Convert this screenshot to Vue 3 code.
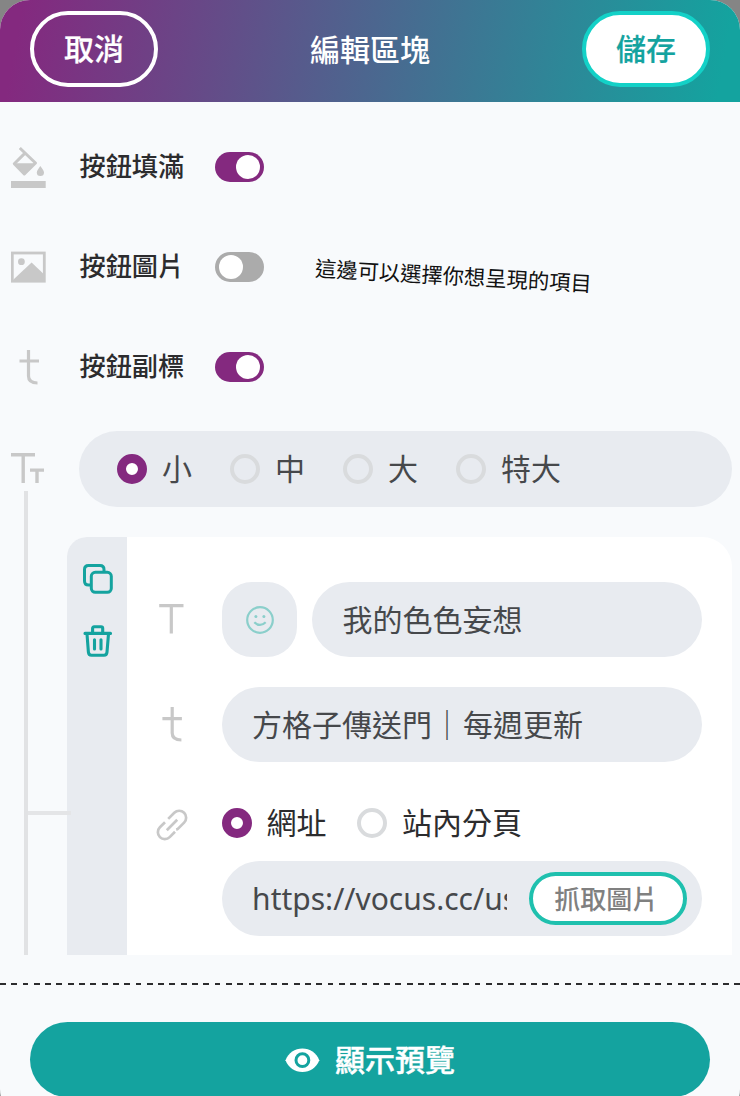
<template>
  <div class="backdrop">
    <main class="sheet">
      <header class="bar">
        <button class="btn cancel">取消</button>
        <h1>編輯區塊</h1>
        <button class="btn save">儲存</button>
      </header>

      <section class="settings">
        <div v-for="item in settings" :key="item.icon" class="setting">
          <span class="setting-icon">
            <svg v-if="item.icon === 'fill'" width="36" height="42" viewBox="0 0 36 42">
              <path d="M8.8 2 L24.5 17 L13.3 28 L3.3 17.7 L14 7.1" fill="none" stroke="#c8c8c8" stroke-width="3" stroke-linejoin="round" />
              <path d="M3 17.3 H25 L14 28.5 Z" fill="#c8c8c8" />
              <path d="M29.3 20 C31 22.5 33 24.7 33 26.5 A3.6 3.6 0 0 1 25.8 26.5 C25.8 24.7 27.8 22.5 29.3 20 Z" fill="#c8c8c8" />
              <rect x="0" y="35" width="34.7" height="7" fill="#c8c8c8" />
            </svg>
            <svg v-else-if="item.icon === 'image'" width="36" height="32" viewBox="0 0 36 32">
              <rect x="1.3" y="2" width="32" height="28.2" fill="none" stroke="#c8c8c8" stroke-width="2.8" />
              <circle cx="10.4" cy="10.7" r="3.4" fill="#c8c8c8" />
              <path d="M3 28 L20.6 11.5 L33.5 23.8 V30 H2 Z" fill="#c8c8c8" />
            </svg>
            <svg v-else width="36" height="36" viewBox="0 0 36 36">
              <path d="M17.5 1 V27 Q17.5 34 26.5 34 M8.5 12 H28" fill="none" stroke="#c8c8c8" stroke-width="3.2" />
            </svg>
          </span>
          <span class="setting-label">{{ item.label }}</span>
          <span class="toggle" :class="{ on: item.on }"><i></i></span>
          <span v-if="item.note" class="note">{{ item.note }}</span>
        </div>
      </section>

      <section class="block">
        <div class="rail">
          <svg width="36" height="32" viewBox="0 0 36 32">
            <path d="M0 1.7 H24 M12.2 2 V30 M19 17.1 H33 M26 17 V30" fill="none" stroke="#c8c8c8" stroke-width="3.4" />
          </svg>
          <div class="line"><i class="branch"></i></div>
        </div>

        <div class="block-main">
          <div class="sizes">
            <label v-for="size in sizes" :key="size">
              <span class="radio" :class="{ checked: size === '小' }"></span>{{ size }}
            </label>
          </div>

          <article class="card">
            <aside class="tools">
              <svg width="30" height="30" viewBox="0 0 30 30">
                <g fill="none" stroke="#14a39f" stroke-width="3" stroke-linejoin="round">
                  <path d="M8 21 H5.5 Q1.5 21 1.5 17 V5.5 Q1.5 1.5 5.5 1.5 H17 Q21 1.5 21 5.5 V8" />
                  <rect x="8.3" y="8.3" width="20" height="20" rx="4" />
                </g>
              </svg>
              <svg width="30" height="32" viewBox="0 0 30 32">
                <g fill="none" stroke="#14a39f" stroke-width="3.1" stroke-linecap="round" stroke-linejoin="round">
                  <path d="M2 8.4 H27.5 M9.6 8 V3.5 Q9.6 1.8 11.2 1.8 H18 Q19.7 1.8 19.7 3.5 V8 M4 9 L5.4 27.2 Q5.7 30.3 8.5 30.3 H21 Q23.7 30.3 24 27.2 L25.5 9 M11.5 14.8 V24 M18 14.8 V24" />
                </g>
              </svg>
            </aside>

            <div class="form">
              <div class="field">
                <span class="field-icon">
                  <svg width="26" height="32" viewBox="0 0 26 32">
                    <path d="M0.2 1.7 H24.5 M12.3 2 V29.5" fill="none" stroke="#c8c8c8" stroke-width="3.2" />
                  </svg>
                </span>
                <span class="emoji">
                  <svg width="28" height="28" viewBox="0 0 28 28">
                    <circle cx="14" cy="14" r="12.8" fill="none" stroke="#8bcfcb" stroke-width="2.2" />
                    <circle cx="9.9" cy="10.4" r="1.5" fill="#8bcfcb" />
                    <circle cx="17.9" cy="10.4" r="1.5" fill="#8bcfcb" />
                    <path d="M8.3 16.2 Q14 21.7 19.7 16.2" fill="none" stroke="#8bcfcb" stroke-width="2.2" />
                  </svg>
                </span>
                <div class="input">我的色色妄想</div>
              </div>

              <div class="field">
                <span class="field-icon">
                  <svg width="26" height="38" viewBox="0 0 26 38">
                    <path d="M13.2 1 V27 Q13.2 34 22.4 34 M3.4 12.7 H22.9" fill="none" stroke="#c8c8c8" stroke-width="3.2" />
                  </svg>
                </span>
                <div class="input">方格子傳送門<span class="divider">｜</span>每週更新</div>
              </div>

              <div class="field link-field">
                <span class="field-icon">
                  <svg width="32" height="32" viewBox="0 0 32 32">
                    <path d="M12.2 9.9 L18.3 3.8 A6.9 6.9 0 0 1 28.1 13.6 L22.6 19.1 A5.5 5.5 0 0 1 20.2 20.6 M19 22.8 L13.7 28.1 A6.9 6.9 0 0 1 3.9 18.3 L9 13.2 M10.8 21.2 L21.2 10.8" fill="none" stroke="#c8c8c8" stroke-width="2.7" />
                  </svg>
                </span>
                <div class="link-body">
                  <div class="targets">
                    <label><span class="radio checked"></span>網址</label>
                    <label><span class="radio"></span>站內分頁</label>
                  </div>
                  <div class="input url">
                    <span class="url-text">https://vocus.cc/user</span>
                    <button class="fetch">抓取圖片</button>
                  </div>
                </div>
              </div>
            </div>
          </article>
        </div>
      </section>

      <footer class="foot">
        <button class="preview">
          <svg width="35" height="26" viewBox="0 0 35 26">
            <path d="M0.5 13.2 C3.5 5.7 9.8 1.5 17.4 1.5 C25 1.5 31.3 5.7 34.3 13.2 C31.3 20.7 25 25 17.4 25 C9.8 25 3.5 20.7 0.5 13.2 Z" fill="#fff" />
            <circle cx="17.4" cy="13.2" r="6.4" fill="#fff" stroke="#14a39f" stroke-width="3" />
          </svg>
          顯示預覽
        </button>
      </footer>
    </main>
  </div>
</template>

<script setup>
const settings = [
  { icon: "fill", label: "按鈕填滿", on: true },
  { icon: "image", label: "按鈕圖片", on: false, note: "這邊可以選擇你想呈現的項目" },
  { icon: "text", label: "按鈕副標", on: true },
];

const sizes = ["小", "中", "大", "特大"];
</script>

<style>
body {
  margin: 0;
  overflow: hidden;
}
</style>

<style scoped>
* {
  box-sizing: border-box;
}
svg {
  display: block;
  flex: none;
}
button {
  font: inherit;
  padding: 0;
  cursor: pointer;
}
.backdrop {
  height: 1096px;
  background: #858585;
  overflow: hidden;
}
.sheet {
  height: 1119px;
  display: flex;
  flex-direction: column;
  overflow: hidden;
  border-radius: 30px;
  background: #f8fafc;
  font-family: "Noto Sans", "Noto Sans CJK TC", sans-serif;
  font-size: 30px;
  line-height: 40px;
  color: #46484b;
}

.bar {
  flex: none;
  height: 101.5px;
  padding: 0 30px 4px;
  display: flex;
  align-items: center;
  justify-content: space-between;
  background: linear-gradient(100deg, #84297f 3%, #14a39f 97%);
}
.bar h1 {
  margin: 3px 0 0;
  font-size: 30px;
  font-weight: 500;
  color: #fff;
}
.btn {
  width: 128px;
  height: 76px;
  border: 4px solid #fff;
  border-radius: 38px;
  font-weight: 500;
  -webkit-text-stroke: 0.2px currentColor;
}
.cancel {
  background: transparent;
  color: #fff;
}
.save {
  background: #fff;
  border-color: #13d1c7;
  color: #14a39f;
}

.settings {
  flex: none;
  padding: 15.5px 0 14px 11px;
}
.setting {
  height: 100px;
  display: flex;
  align-items: center;
}
.setting-icon {
  width: 68.5px;
}
.setting-label {
  width: 135px;
  padding-bottom: 3px;
  font-size: 26.2px;
  font-weight: 500;
  color: #2c2c2e;
}
.toggle {
  width: 49.5px;
  height: 30px;
  padding: 3px 4px;
  display: flex;
  border-radius: 15px;
  background: #ababab;
}
.toggle i {
  width: 24px;
  height: 24px;
  border-radius: 50%;
  background: #fff;
}
.toggle.on {
  justify-content: flex-end;
  background: #84297f;
}
.note {
  margin: 18px 0 0 51px;
  font-size: 21.3px;
  line-height: 30px;
  color: #111;
  transform: rotate(3.2deg);
}

.block {
  flex: none;
  height: 524px;
  display: flex;
}
.rail {
  width: 67px;
  flex: none;
  padding: 22px 0 0 11px;
  display: flex;
  flex-direction: column;
}
.line {
  flex: 1;
  margin: 6px 0 0 13px;
  border-left: 4px solid #e1e2e4;
  position: relative;
}
.branch {
  position: absolute;
  left: 0;
  top: 320px;
  width: 43px;
  height: 4px;
  background: #e4e5e7;
}
.block-main {
  flex: 1;
  padding-right: 8px;
  display: flex;
  flex-direction: column;
}
.sizes {
  height: 76px;
  margin: 0 0 30px 12px;
  padding-left: 38px;
  display: flex;
  align-items: center;
  gap: 38px;
  border-radius: 38px;
  background: #e8ebf0;
}
label {
  display: flex;
  align-items: center;
  gap: 15px;
}
.radio {
  width: 30px;
  height: 30px;
  border: 4px solid #d9dbdd;
  border-radius: 50%;
}
.radio.checked {
  border: 9.5px solid #84297f;
  background: #fff;
}

.card {
  flex: 1;
  display: flex;
  overflow: hidden;
  border-radius: 20px 30px 0 0;
  background: #fff;
}
.tools {
  width: 60px;
  padding: 26.5px 0 0 1px;
  display: flex;
  flex-direction: column;
  align-items: center;
  gap: 31px;
  background: #e8ebf0;
}
.form {
  flex: 1;
  padding: 45px 30px 0 28px;
  display: flex;
  flex-direction: column;
  gap: 30px;
}
.field {
  display: flex;
  align-items: center;
}
.field-icon {
  width: 33px;
  margin-right: 33.6px;
  display: flex;
  justify-content: center;
}
.emoji {
  width: 75.4px;
  height: 75px;
  margin-right: 15px;
  padding-left: 1px;
  display: flex;
  align-items: center;
  justify-content: center;
  border-radius: 30px;
  background: #e8ebf0;
}
.input {
  flex: 1;
  height: 75px;
  padding-left: 30.5px;
  display: flex;
  align-items: center;
  border-radius: 38px;
  background: #e8ebf0;
}
.divider {
  margin-right: 1px;
}
.link-field {
  align-items: flex-start;
}
.link-field .field-icon {
  padding-top: 16.5px;
}
.link-body {
  flex: 1;
}
.targets {
  height: 61px;
  margin-bottom: 8px;
  display: flex;
  align-items: center;
  gap: 30.5px;
  color: #2c2c2e;
}
.url {
  padding-right: 15px;
  justify-content: space-between;
}
.url-text {
  width: 255px;
  overflow: hidden;
  white-space: nowrap;
}
.fetch {
  width: 158.5px;
  height: 53px;
  padding-right: 3px;
  border: 4px solid #1fc0ae;
  border-radius: 27px;
  background: #fff;
  font-size: 26px;
  font-weight: 500;
  line-height: 36px;
  color: #808080;
}

.foot {
  flex: 1;
  margin-top: 28px;
  padding: 39px 30px 0;
  background: repeating-linear-gradient(90deg, #2c2c2e 0 5.8px, transparent 5.8px 11.3px) 0 0 / 100% 2px no-repeat;
}
.preview {
  width: 100%;
  height: 75px;
  display: flex;
  align-items: center;
  justify-content: center;
  gap: 15px;
  border: 0;
  border-radius: 38px;
  background: #14a39f;
  font-weight: 500;
  -webkit-text-stroke: 0.4px currentColor;
  color: #fff;
}
</style>
